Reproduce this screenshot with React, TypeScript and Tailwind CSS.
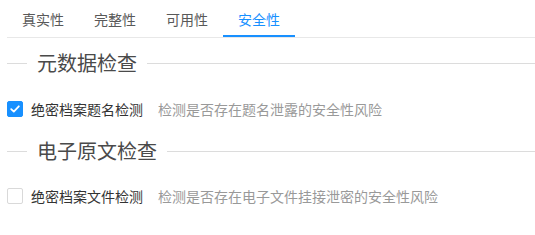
import React, { useState } from "react";

const tabs = ["真实性", "完整性", "可用性", "安全性"];

type Check = {
  label: string;
  desc: string;
  checked: boolean;
};

type Section = {
  title: string;
  items: Check[];
};

const sections: Section[] = [
  {
    title: "元数据检查",
    items: [{ label: "绝密档案题名检测", desc: "检测是否存在题名泄露的安全性风险", checked: true }],
  },
  {
    title: "电子原文检查",
    items: [{ label: "绝密档案文件检测", desc: "检测是否存在电子文件挂接泄密的安全性风险", checked: false }],
  },
];

function Checkbox({ checked, onChange }: { checked: boolean; onChange: () => void }) {
  return (
    <button
      type="button"
      onClick={onChange}
      className={
        checked
          ? "w-4 h-4 rounded-[2px] bg-[#1890ff] border border-[#1890ff] flex items-center justify-center shrink-0"
          : "w-4 h-4 rounded-[2px] bg-white border border-[#d9d9d9] flex items-center justify-center shrink-0"
      }
    >
      {checked && (
        <svg width="10" height="8" viewBox="0 0 10 8" fill="none">
          <path d="M1.2 4.1 3.8 6.6 8.8 1.3" stroke="white" strokeWidth="1.8" strokeLinecap="round" strokeLinejoin="round" />
        </svg>
      )}
    </button>
  );
}

export default function App() {
  const [active, setActive] = useState(3);
  const [state, setState] = useState(sections.map((s) => s.items.map((i) => i.checked)));

  const toggle = (si: number, ii: number) => {
    setState((prev) => prev.map((row, r) => row.map((v, c) => (r === si && c === ii ? !v : v))));
  };

  return (
    <div
      className="w-[535px] h-[235px] bg-white pl-[7px]"
      style={{ fontFamily: '"Microsoft YaHei", "Noto Sans CJK SC", sans-serif' }}
    >
      <div className="flex h-[38px] border-b border-[#e8e8e8]">
        {tabs.map((t, i) => (
          <button
            key={t}
            type="button"
            onClick={() => setActive(i)}
            className={
              i === active
                ? "h-[37px] px-[15px] text-[14px] leading-[22px] text-[#1890ff] border-b-2 border-[#1890ff] pt-[2px]"
                : "h-[37px] px-[15px] text-[14px] leading-[22px] text-[#595959] border-b-2 border-transparent pt-[2px]"
            }
          >
            {t}
          </button>
        ))}
      </div>

      {sections.map((s, si) => (
        <div key={s.title}>
          <div className={si === 0 ? "flex items-center h-[32px] mt-[9px]" : "flex items-center h-[32px] mt-[15px]"}>
            <div className="w-[20px] border-t border-[#dcdcdc]"></div>
            <span className="px-[10px] text-[20px] leading-[32px] text-[#4a4a4a]">{s.title}</span>
            <div className="flex-1 border-t border-[#dcdcdc]"></div>
          </div>
          {s.items.map((item, ii) => (
            <div
              key={item.label}
              className={si === 0 ? "flex items-center h-[22px] mt-[19px]" : "flex items-center h-[22px] mt-[18px]"}
            >
              <Checkbox checked={state[si][ii]} onChange={() => toggle(si, ii)} />
              <span className="ml-[8px] text-[14px] leading-[22px] text-[#333333]">{item.label}</span>
              <span className="ml-[15px] text-[14px] leading-[22px] text-[#999999]">{item.desc}</span>
            </div>
          ))}
        </div>
      ))}
    </div>
  );
}
